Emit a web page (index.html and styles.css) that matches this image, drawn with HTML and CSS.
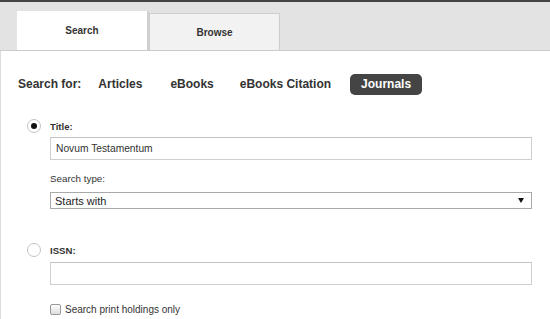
FILE: index.html
```html
<!DOCTYPE html>
<html>
<head>
<meta charset="utf-8">
<link rel="stylesheet" href="styles.css">
</head>
<body>
<div class="header">
  <div class="tab tab-active">Search</div>
  <div class="tab tab-inactive">Browse</div>
</div>
<div class="content">
  <div class="searchfor">
    <span class="sf-label">Search for:</span>
    <span class="sf-item">Articles</span>
    <span class="sf-item">eBooks</span>
    <span class="sf-item sf-citation">eBooks Citation</span>
    <span class="sf-item sf-active">Journals</span>
  </div>
  <div class="form">
    <div class="radio-row">
      <span class="radio radio-on"></span>
      <span class="field-label">Title:</span>
    </div>
    <div class="textbox tb-title">Novum Testamentum</div>
    <div class="sub-label">Search type:</div>
    <div class="select">
      <span>Starts with</span>
      <span class="arrow"></span>
    </div>
    <div class="radio-row row-issn">
      <span class="radio"></span>
      <span class="field-label">ISSN:</span>
    </div>
    <div class="textbox tb-issn"></div>
    <div class="check-row">
      <span class="checkbox"></span>
      <span class="check-label">Search print holdings only</span>
    </div>
  </div>
</div>
</body>
</html>
```

FILE: styles.css
```css
* { box-sizing: border-box; }
html, body { margin: 0; padding: 0; background: #fff; }
body {
  font-family: "Liberation Sans", Arial, sans-serif;
  color: #333;
  width: 550px;
  height: 319px;
  display: flex;
  flex-direction: column;
}
.header {
  flex: none;
  border-top: 2px solid #444;
  background: #e3e3e3;
  height: 51px;
  border-bottom: 1px solid #cbcbcb;
  display: flex;
  align-items: flex-end;
  padding-left: 17px;
}
.tab {
  display: flex;
  align-items: center;
  justify-content: center;
  font-size: 10px;
  font-weight: bold;
  color: #333;
}
.tab-active {
  width: 132px;
  height: 39px;
  background: #fff;
  border-right: 2px solid #d0d0d0;
}
.tab-inactive {
  width: 131px;
  height: 37px;
  background: #f2f2f2;
  border: 1px solid #cdcdcd;
  border-bottom: none;
  padding-top: 1px;
}
.content {
  flex: 1;
  min-height: 0;
  border-left: 1px solid #dcdcdc;
}
.searchfor {
  display: flex;
  align-items: center;
  margin-top: 23px;
  padding-left: 17px;
  height: 20px;
  font-size: 12px;
  font-weight: bold;
  color: #333;
}
.sf-label { margin-right: 6px; }
.sf-item {
  padding: 0 11px;
  height: 20px;
  line-height: 20px;
  margin-right: 6px;
  border-radius: 5px;
}
.sf-citation { margin-left: -2px; margin-right: 8px; }
.sf-active {
  background: #444;
  color: #fff;
  height: 21px;
  line-height: 21px;
}
.form {
  padding: 0 18px 0 26px;
}
.radio-row {
  display: flex;
  align-items: center;
  height: 14px;
  margin-top: 25px;
}
.row-issn { margin-top: 34px; }
.radio {
  width: 14px;
  height: 14px;
  border-radius: 50%;
  border: 1px solid #c4c4c4;
  background: #fff;
  display: flex;
  align-items: center;
  justify-content: center;
  margin-right: 9px;
}
.radio-on::after {
  content: "";
  width: 6px;
  height: 6px;
  border-radius: 50%;
  background: #111;
}
.field-label {
  font-size: 9.6px;
  font-weight: bold;
  color: #333;
}
.textbox {
  margin-left: 23px;
  height: 23px;
  border: 1px solid #cfcfcf;
  border-top-color: #c4c4c4;
  background: #fff;
  font-size: 10.25px;
  color: #333;
  display: flex;
  align-items: center;
  padding-left: 5px;
}
.tb-title { margin-top: 4px; }
.tb-issn { margin-top: 5px; }
.sub-label {
  margin-left: 23px;
  margin-top: 13px;
  height: 12px;
  line-height: 12px;
  font-size: 9.8px;
  color: #333;
}
.select {
  margin-left: 23px;
  margin-top: 7px;
  height: 17px;
  border: 1px solid #a9a9a9;
  background: #fff;
  display: flex;
  align-items: center;
  justify-content: space-between;
  padding: 0 5px 0 4px;
  font-size: 11px;
  color: #222;
}
.arrow {
  width: 0;
  height: 0;
  border-left: 3px solid transparent;
  border-right: 3px solid transparent;
  border-top: 5px solid #111;
  margin-right: 2px;
}
.check-row {
  display: flex;
  align-items: center;
  margin-left: 23px;
  margin-top: 18px;
  height: 12px;
}
.checkbox {
  width: 11px;
  height: 11px;
  border: 1px solid #9a9a9a;
  border-radius: 2px;
  background: linear-gradient(#fdfdfd, #dedede);
  margin-right: 4px;
}
.check-label {
  font-size: 10px;
  color: #333;
}
```
